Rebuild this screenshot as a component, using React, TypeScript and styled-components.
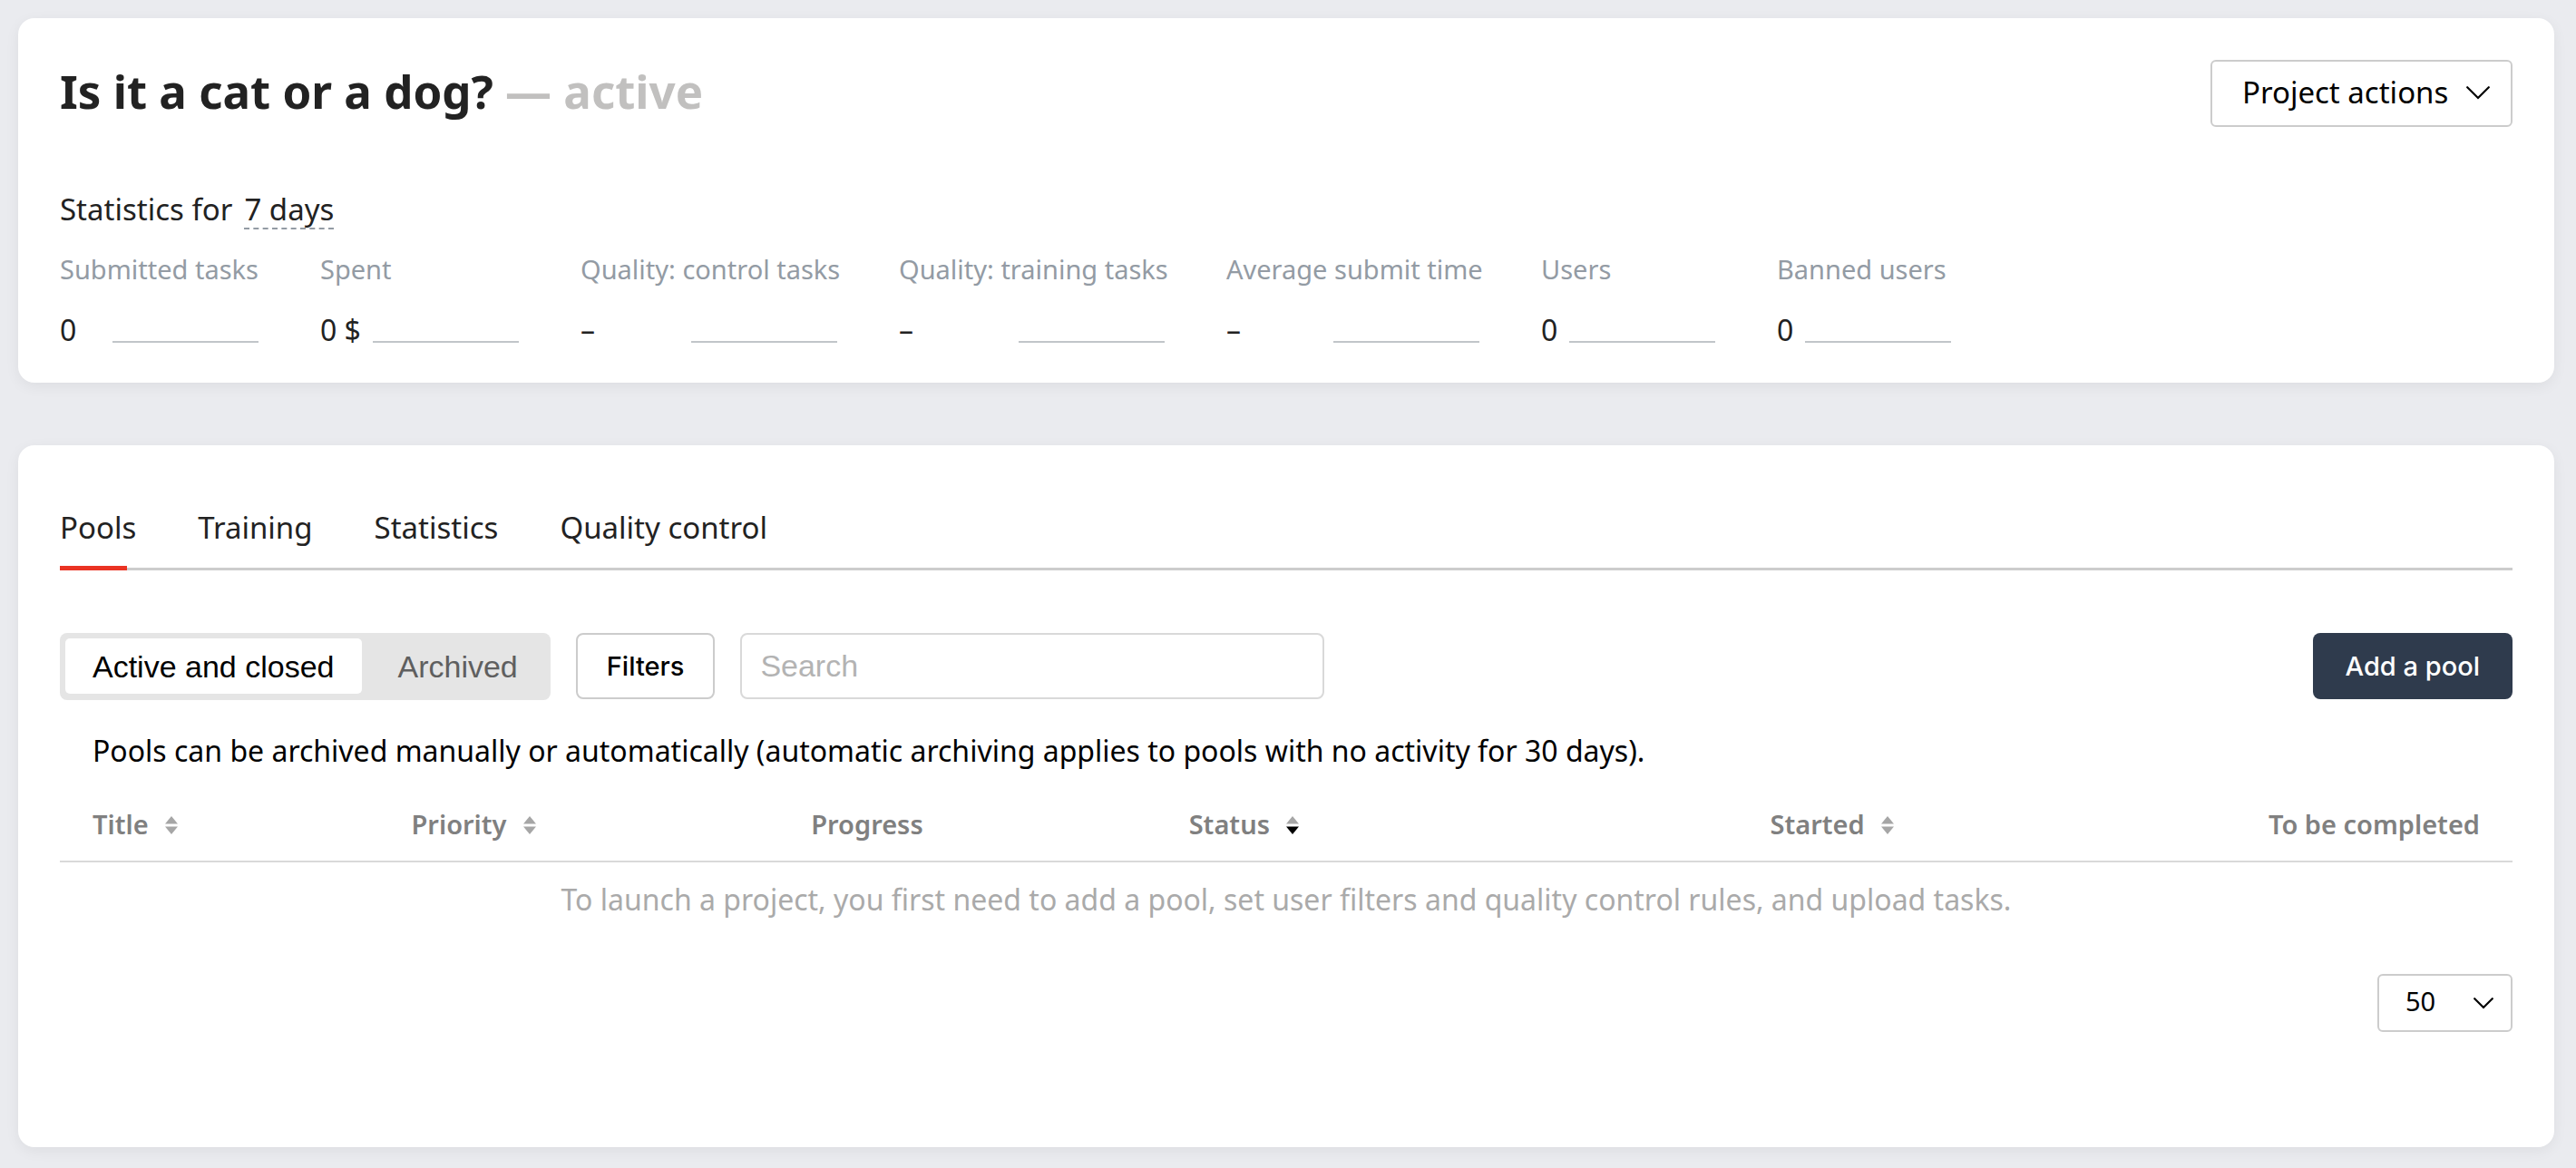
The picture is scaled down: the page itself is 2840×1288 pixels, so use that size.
import { useState } from "react";
import styled, { createGlobalStyle, css } from "styled-components";

const sans = `"Noto Sans", "Open Sans", sans-serif`;
const grotesk = `"Liberation Sans", Arial, sans-serif`;
const medium = `Inter, "Liberation Sans", sans-serif`;

const GlobalStyle = createGlobalStyle`
  *, *::before, *::after { box-sizing: border-box; }
  body {
    margin: 0;
    background: #eaebef;
    color: #222;
    font: 400 32px/44px ${sans};
  }
  button, input, select { margin: 0; font: inherit; color: inherit; }
  button { cursor: pointer; }
`;

const Page = styled.main`
  display: flex;
  flex-direction: column;
  gap: 69px;
  padding: 20px 24px 23px 20px;
`;

const Card = styled.section<{ $bottom: number; $top: number }>`
  padding: ${(p) => p.$top}px 46px ${(p) => p.$bottom}px;
  border-radius: 18px;
  background: #fff;
  box-shadow: 0 4px 16px rgba(0, 0, 0, 0.06);
`;

const ProjectHeader = styled.header`
  display: flex;
  justify-content: space-between;
  align-items: flex-start;
  gap: 28px;
`;

const Title = styled.h1`
  margin: 0;
  font-size: 51px;
  font-weight: 700;
  line-height: 68px;
`;

const TitleStatus = styled.span`
  color: #c1c0bf;
`;

const outlined = css`
  border: 2px solid #ccc;
  border-radius: 8px;
  background: #fff;
  color: #000;
`;

const ActionsButton = styled.button`
  ${outlined}
  display: flex;
  flex: none;
  align-items: center;
  justify-content: space-between;
  min-width: 333px;
  height: 74px;
  padding: 0 23px 2px 33px;
  border-radius: 6px;
  font-size: 33px;
`;

const Period = styled.div`
  display: flex;
  align-items: baseline;
  gap: 13px;
  margin-top: 69px;
  font-size: 33px;
`;

const PeriodButton = styled.button`
  padding: 0;
  border: 0;
  border-bottom: 2px dashed #939ba4;
  background: none;
  line-height: 40px;
`;

const Metrics = styled.dl`
  display: flex;
  flex-wrap: wrap;
  gap: 27px 68px;
  margin: 26px 0 0;
`;

const Metric = styled.div<{ $width: number }>`
  display: flex;
  flex-direction: column;
  gap: 27px;
  width: ${(p) => p.$width}px;
`;

const MetricLabel = styled.dt`
  color: #939ba4;
  font-size: 29px;
  line-height: 36px;
  white-space: nowrap;
`;

const MetricValue = styled.dd`
  display: flex;
  align-items: flex-end;
  justify-content: space-between;
  margin: 0;
  white-space: nowrap;
`;

const Sparkline = styled.span`
  width: 161px;
  height: 2px;
  margin-bottom: 8px;
  background: #c1c5c9;
`;

const Tabs = styled.nav`
  display: flex;
  gap: 68px;
  box-shadow: inset 0 -3px #ccc;
  font-size: 33px;
`;

const Tab = styled.a<{ $active: boolean }>`
  padding-bottom: 25px;
  color: inherit;
  text-decoration: none;
  ${(p) =>
    p.$active &&
    css`
      background: linear-gradient(#ea3323, #ea3323) left bottom / 74px 5px no-repeat;
    `}
`;

const Toolbar = styled.div`
  display: flex;
  align-items: flex-start;
  gap: 28px;
  margin-top: 69px;
`;

const Segmented = styled.div`
  display: flex;
  flex: none;
  gap: 10px;
  height: 74px;
  padding: 6px 6px 7px;
  border-radius: 8px;
  background: #e5e5e5;
`;

const Segment = styled.button<{ $active: boolean }>`
  padding: 0 30px;
  border: 0;
  border-radius: 5px;
  background: ${(p) => (p.$active ? "#fff" : "transparent")};
  color: ${(p) => (p.$active ? "#000" : "#5f5f5f")};
  font-family: ${grotesk};
  font-size: 34px;
`;

const buttonText = css`
  height: 73px;
  font-family: ${medium};
  font-size: 29px;
  font-weight: 500;
`;

const FiltersButton = styled.button`
  ${outlined}
  ${buttonText}
  flex: none;
  padding: 0 32px;
`;

const SearchInput = styled.input`
  ${outlined}
  flex: 0 1 644px;
  min-width: 0;
  height: 73px;
  padding: 0 20px;
  border-color: #d9d9d9;
  font-family: ${grotesk};
  font-size: 34px;
  &::placeholder { color: #b3b3b3; opacity: 1; }
`;

const AddButton = styled.button`
  ${buttonText}
  flex: none;
  margin-left: auto;
  padding: 0 36px;
  border: 0;
  border-radius: 8px;
  background: #2f3b4d;
  color: #fff;
`;

const Notice = styled.p`
  margin: 34px 36px 0;
  color: #000;
`;

const PoolTable = styled.table`
  width: 100%;
  table-layout: fixed;
  border-collapse: separate;
  border-spacing: 0;
`;

const HeadCell = styled.th<{ $width: string; $align: "left" | "right" }>`
  width: ${(p) => p.$width};
  padding: 41px 36px 22px;
  border-bottom: 2px solid #d9d9d9;
  color: #808080;
  font-size: 29px;
  font-weight: 600;
  line-height: 36px;
  text-align: ${(p) => p.$align};
  vertical-align: top;
  white-space: nowrap;
`;

const SortButton = styled.button`
  display: flex;
  align-items: baseline;
  gap: 18px;
  padding: 0;
  border: 0;
  background: none;
`;

const EmptyCell = styled.td`
  padding: 19px 36px 0;
  color: #aaa;
  text-align: center;
`;

const Pagination = styled.div`
  display: flex;
  justify-content: flex-end;
  margin-top: 60px;
`;

const SelectBox = styled.div`
  display: grid;
  grid-template-columns: 149px;
  align-items: center;
  > * { grid-area: 1 / 1; }
  > svg {
    justify-self: end;
    margin-right: 21px;
    pointer-events: none;
  }
`;

const PageSize = styled.select`
  ${outlined}
  width: 100%;
  height: 64px;
  padding: 0 0 4px 29px;
  border-radius: 6px;
  font-size: 29px;
  appearance: none;
`;

const Chevron = ({ width, height }: { width: number; height: number }) => (
  <svg width={width} height={height} viewBox={`0 0 ${width} ${height}`} fill="none" aria-hidden="true">
    <path
      d={`M1.2 1.2 L${width / 2} ${height - 2} L${width - 1.2} 1.2`}
      stroke="#000"
      strokeWidth="2.2"
      strokeLinecap="round"
    />
  </svg>
);

const SortIcon = ({ sorted }: { sorted: boolean }) => (
  <svg width="14" height="20" viewBox="0 0 14 20" aria-hidden="true">
    <path d="M7 0 L14 8.5 H0 Z" fill="#a6a6a6" />
    <path d="M0 11.5 H14 L7 20 Z" fill={sorted ? "#000" : "#a6a6a6"} />
  </svg>
);

const metrics = [
  { label: "Submitted tasks", value: "0", width: 219 },
  { label: "Spent", value: "0 $", width: 219 },
  { label: "Quality: control tasks", value: "–", width: 283 },
  { label: "Quality: training tasks", value: "–", width: 293 },
  { label: "Average submit time", value: "–", width: 279 },
  { label: "Users", value: "0", width: 192 },
  { label: "Banned users", value: "0", width: 192 },
];

const tabs = ["Pools", "Training", "Statistics", "Quality control"];
const segments = ["Active and closed", "Archived"];

const columns: { label: string; width: string; sortable: boolean; align?: "right" }[] = [
  { label: "Title", width: "13%", sortable: true },
  { label: "Priority", width: "16.3%", sortable: true },
  { label: "Progress", width: "15.4%", sortable: false },
  { label: "Status", width: "23.7%", sortable: true },
  { label: "Started", width: "auto", sortable: true },
  { label: "To be completed", width: "15%", sortable: false, align: "right" },
];

export default function App() {
  const [segment, setSegment] = useState(segments[0]);
  const [sorted, setSorted] = useState("Status");

  return (
    <>
      <GlobalStyle />
      <Page>
        <Card $top={46} $bottom={36}>
          <ProjectHeader>
            <Title>
              Is it a cat or a dog? <TitleStatus>— active</TitleStatus>
            </Title>
            <ActionsButton type="button">
              Project actions
              <Chevron width={26} height={15} />
            </ActionsButton>
          </ProjectHeader>
          <Period>
            Statistics for
            <PeriodButton type="button">7 days</PeriodButton>
          </Period>
          <Metrics>
            {metrics.map((m) => (
              <Metric key={m.label} $width={m.width}>
                <MetricLabel>{m.label}</MetricLabel>
                <MetricValue>
                  {m.value}
                  <Sparkline />
                </MetricValue>
              </Metric>
            ))}
          </Metrics>
        </Card>

        <Card $top={69} $bottom={127}>
          <Tabs>
            {tabs.map((t, i) => (
              <Tab key={t} href="#" $active={i === 0}>
                {t}
              </Tab>
            ))}
          </Tabs>
          <Toolbar>
            <Segmented>
              {segments.map((s) => (
                <Segment key={s} type="button" $active={s === segment} onClick={() => setSegment(s)}>
                  {s}
                </Segment>
              ))}
            </Segmented>
            <FiltersButton type="button">Filters</FiltersButton>
            <SearchInput type="text" placeholder="Search" aria-label="Search" />
            <AddButton type="button">Add a pool</AddButton>
          </Toolbar>
          <Notice>
            Pools can be archived manually or automatically (automatic archiving applies to pools with no
            activity for 30 days).
          </Notice>
          <PoolTable>
            <thead>
              <tr>
                {columns.map((c) => (
                  <HeadCell key={c.label} scope="col" $width={c.width} $align={c.align ?? "left"}>
                    {c.sortable ? (
                      <SortButton type="button" onClick={() => setSorted(c.label)}>
                        {c.label}
                        <SortIcon sorted={c.label === sorted} />
                      </SortButton>
                    ) : (
                      c.label
                    )}
                  </HeadCell>
                ))}
              </tr>
            </thead>
            <tbody>
              <tr>
                <EmptyCell colSpan={columns.length}>
                  To launch a project, you first need to add a pool, set user filters and quality control
                  rules, and upload tasks.
                </EmptyCell>
              </tr>
            </tbody>
          </PoolTable>
          <Pagination>
            <SelectBox>
              <PageSize aria-label="Pools per page" defaultValue="50">
                <option>20</option>
                <option>50</option>
                <option>100</option>
              </PageSize>
              <Chevron width={22} height={13} />
            </SelectBox>
          </Pagination>
        </Card>
      </Page>
    </>
  );
}
